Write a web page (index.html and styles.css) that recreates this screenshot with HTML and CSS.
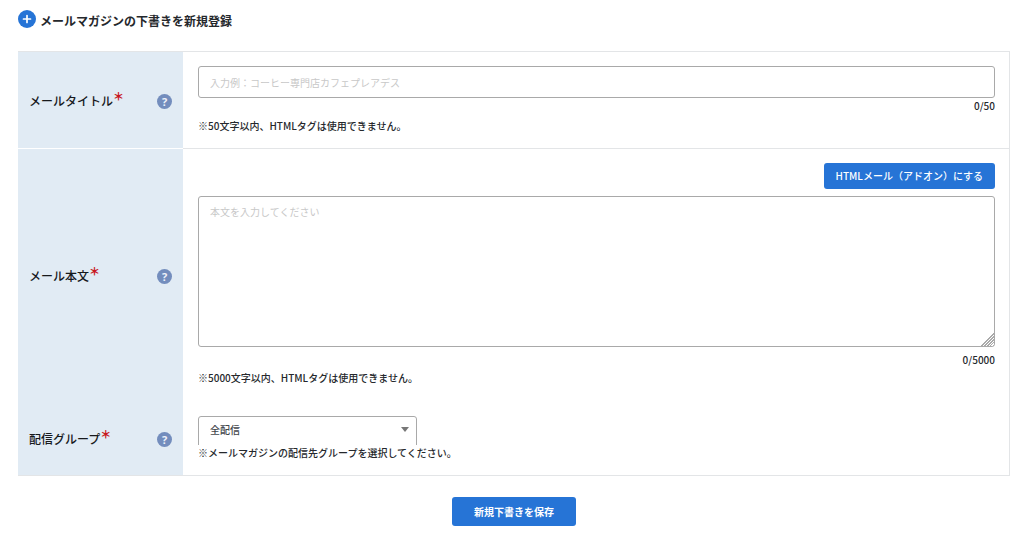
FILE: index.html
```html
<!DOCTYPE html>
<html lang="ja">
<head>
<meta charset="utf-8">
<meta name="viewport" content="width=device-width, initial-scale=1">
<title>メールマガジンの下書きを新規登録</title>
<link rel="stylesheet" href="styles.css">
</head>
<body>
<main class="page">
  <h1 class="heading">
    <svg class="heading-icon" viewBox="0 0 18 18" aria-hidden="true"><circle cx="9" cy="9" r="9" fill="#2674d6"/><path d="M9 5.500v7M5.500 9h7" stroke="#fff" stroke-width="1.7" stroke-linecap="round"/></svg>
    <span class="heading-text">メールマガジンの下書きを新規登録</span>
  </h1>
  <form class="form">
    <div class="panel">
      <div class="row row-title">
        <div class="label-cell">
          <label class="label" for="title">メールタイトル<span class="required">＊</span></label>
          <button class="help" type="button" aria-label="ヘルプ">?</button>
        </div>
        <div class="field-cell">
          <input class="input" id="title" type="text" placeholder="入力例：コーヒー専門店カフェプレアデス">
          <p class="counter">0/50</p>
          <p class="note">※50文字以内、HTMLタグは使用できません。</p>
        </div>
      </div>
      <div class="row row-body">
        <div class="label-cell">
          <label class="label" for="body">メール本文<span class="required">＊</span></label>
          <button class="help" type="button" aria-label="ヘルプ">?</button>
        </div>
        <div class="field-cell">
          <button class="button button-small" type="button">HTMLメール（アドオン）にする</button>
          <textarea class="input textarea" id="body" placeholder="本文を入力してください"></textarea>
          <p class="counter">0/5000</p>
          <p class="note">※5000文字以内、HTMLタグは使用できません。</p>
        </div>
      </div>
      <div class="row row-group">
        <div class="label-cell">
          <label class="label" for="group">配信グループ<span class="required">＊</span></label>
          <button class="help" type="button" aria-label="ヘルプ">?</button>
        </div>
        <div class="field-cell">
          <div class="select-wrap">
            <select class="input select" id="group"><option>全配信</option></select>
            <svg class="arrow" viewBox="0 0 8 5" aria-hidden="true"><path d="M0 0h8L4 5z" fill="#777"/></svg>
          </div>
          <p class="note">※メールマガジンの配信先グループを選択してください。</p>
        </div>
      </div>
    </div>
    <button class="button button-save" type="submit">新規下書きを保存</button>
  </form>
</main>
</body>
</html>
```
FILE: styles.css
```css
* {
  box-sizing: border-box;
}

body {
  margin: 0;
  background: #fff;
  color: #25282c;
  font: 500 10px/16px "Noto Sans CJK JP", sans-serif;
}

button,
input,
select,
textarea {
  font: inherit;
}

.page {
  padding: 10px 14px 10px 18px;
}

.heading {
  display: flex;
  align-items: flex-start;
  gap: 4px;
  margin: 0 0 19px;
  font-size: 12px;
  line-height: 22px;
  font-weight: 700;
}

.heading-icon {
  width: 18px;
  height: 18px;
}

.form {
  display: flex;
  flex-direction: column;
  align-items: center;
  gap: 21px;
}

.panel {
  width: 100%;
  border: 1px solid #e3e5e7;
  border-left: 0;
}

.row {
  display: grid;
  grid-template-columns: 165px 1fr;
}

.label-cell {
  display: flex;
  align-items: center;
  justify-content: space-between;
  padding: 2px 11px 0;
  background: #e1ebf4;
}

.row-title > .label-cell {
  border-bottom: 1px solid #fff;
}

.row-title > .field-cell {
  border-bottom: 1px solid #e3e5e7;
}

.label {
  font-size: 12px;
  line-height: 20px;
  color: #17191c;
}

.required {
  color: #c8161d;
  font-size: 11px;
  font-weight: 900;
  line-height: 1;
  vertical-align: 5px;
}

.help {
  width: 15px;
  height: 15px;
  padding: 0;
  border: 0;
  border-radius: 50%;
  background: #738dbd;
  color: #eef2f9;
  font: 700 11px/15px "Open Sans", sans-serif;
  text-align: center;
}

.field-cell {
  display: flex;
  flex-direction: column;
  padding: 14px 14px 14px 15px;
}

.row-group > .field-cell {
  padding-top: 15px;
}

.input {
  width: 100%;
  height: 32px;
  padding: 0 11px;
  border: 1px solid #a9a9a9;
  border-radius: 3px;
  background: #fff;
  color: #43474c;
}

.input::placeholder {
  color: #c8c8c8;
  font-weight: 400;
  opacity: 1;
}

.counter,
.note {
  margin: 0;
}

.counter {
  text-align: right;
}

.row-title .note {
  margin-top: 4px;
}

.row-body .counter {
  margin-top: 5px;
}

.row-body .note {
  margin-top: 2px;
}

.row-body .field-cell {
  padding-bottom: 15px;
}

.button {
  border: 0;
  border-radius: 3px;
  background: #2674d6;
  color: #fff;
}

.button-small {
  align-self: flex-end;
  height: 26px;
  padding: 0 12px;
  margin-bottom: 7px;
}

.button-save {
  height: 29px;
  padding: 0 22px;
  font-weight: 700;
}

.textarea {
  display: block;
  height: 151px;
  padding: 7px 11px;
  resize: vertical;
}

.textarea::-webkit-resizer {
  background:
    linear-gradient(135deg, #fff 55%, transparent 55%),
    repeating-linear-gradient(135deg, #aaa 0 1px, #fff 1px 2px);
}

.select-wrap {
  position: relative;
  width: 219px;
  height: 29px;
  overflow: hidden;
}

.select {
  padding-bottom: 4px;
  appearance: none;
}

.arrow {
  position: absolute;
  top: 11px;
  right: 8px;
  width: 8px;
  height: 5px;
  pointer-events: none;
}
```
